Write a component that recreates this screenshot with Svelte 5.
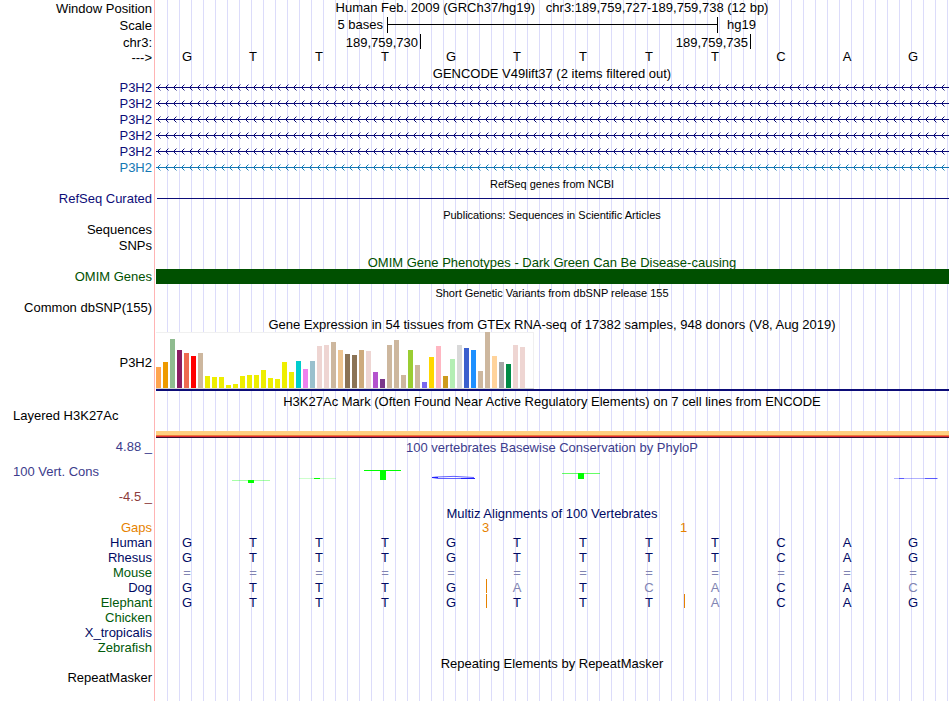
<script>
  const bases = [...'GTTTGTTTTCAG'];

  const transcripts = [
    { name: 'P3H2', tone: 'navy' },
    { name: 'P3H2', tone: 'navy' },
    { name: 'P3H2', tone: 'navy' },
    { name: 'P3H2', tone: 'navy' },
    { name: 'P3H2', tone: 'navy' },
    { name: 'P3H2', tone: 'sky' }
  ];

  // one [height, colour] pair per tissue
  const tissues = [
    [21, '#ffa54f'], [26, '#ee9a00'], [49, '#8fbc8f'], [38, '#8b1c62'], [35, '#ee6a50'],
    [32, '#ff0000'], [35, '#cdb79e'], [12, '#eeee00'], [11, '#eeee00'], [11, '#eeee00'],
    [3, '#eeee00'], [4, '#eeee00'], [12, '#eeee00'], [13, '#eeee00'], [13, '#eeee00'],
    [18, '#eeee00'], [10, '#eeee00'], [9, '#eeee00'], [26, '#eeee00'], [16, '#eeee00'],
    [27, '#00cdcd'], [19, '#ee82ee'], [27, '#9ac0cd'], [42, '#eed5d2'], [43, '#eed5d2'],
    [46, '#cdb79e'], [38, '#eec591'], [34, '#8b7355'], [33, '#8b7355'], [38, '#cdaa7d'],
    [37, '#eed5d2'], [16, '#b452cd'], [9, '#7a378b'], [43, '#cdb79e'], [48, '#cdb79e'],
    [13, '#cdb79e'], [38, '#9acd32'], [23, '#cdb79e'], [6, '#7a67ee'], [31, '#ffd700'],
    [42, '#ffb6c1'], [12, '#cd9b1d'], [29, '#b4eeb4'], [43, '#d9d9d9'], [40, '#3a5fcd'],
    [38, '#1e90ff'], [17, '#cdb79e'], [56, '#cdb79e'], [32, '#ffd39b'], [26, '#a6a6a6'],
    [24, '#008b45'], [43, '#eed5d2'], [41, '#eed5d2'], [0, '#ff00ff']
  ];

  const gaps = { 4: '3', 7: '1' };

  // "faint" lists mismatching columns, "inserts" the columns followed by an insertion
  const species = [
    { name: 'Human', tone: 'ink', seq: 'GTTTGTTTTCAG', faint: [], inserts: [] },
    { name: 'Rhesus', tone: 'ink', seq: 'GTTTGTTTTCAG', faint: [], inserts: [] },
    { name: 'Mouse', tone: 'leaf', seq: '============', faint: [0, 1, 2, 3, 4, 5, 6, 7, 8, 9, 10, 11], inserts: [] },
    { name: 'Dog', tone: 'ink', seq: 'GTTTGATCACAC', faint: [5, 7, 8, 11], inserts: [4] },
    { name: 'Elephant', tone: 'leaf', seq: 'GTTTGTTTACAG', faint: [8], inserts: [4, 7] },
    { name: 'Chicken', tone: 'leaf', seq: '            ', faint: [], inserts: [] },
    { name: 'X_tropicalis', tone: 'ink', seq: '            ', faint: [], inserts: [] },
    { name: 'Zebrafish', tone: 'leaf', seq: '            ', faint: [], inserts: [] }
  ];
</script>

{#snippet title(text, size = '', tone = '')}
  <h2 class="title {size} {tone}">{text}</h2>
{/snippet}

<main class="browser">
  <header>
    <div class="row head">
      <div class="label low">Window Position</div>
      <h1>Human Feb. 2009 (GRCh37/hg19)&nbsp;&nbsp; chr3:189,759,727-189,759,738 (12 bp)</h1>
    </div>
    <div class="row head">
      <div class="label low">Scale</div>
      <div class="scale">
        <span class="before">5 bases</span>
        <span class="ruler"></span>
        <span class="after">hg19</span>
      </div>
    </div>
    <div class="row ticks">
      <div class="label low">chr3:</div>
      <div class="positions">
        <span>189,759,730</span>
        <span>189,759,735</span>
      </div>
    </div>
    <div class="row head">
      <div class="label low">---&gt;</div>
      <div class="bases">
        {#each bases as base}<span>{base}</span>{/each}
      </div>
    </div>
  </header>

  <section>
    {@render title('GENCODE V49lift37 (2 items filtered out)', 'short')}
    {#each transcripts as t, i}
      <div class="row {t.tone}">
        <div class="label">{t.name}</div>
        <svg class="strand" aria-hidden="true" shape-rendering="crispEdges">
          <defs>
            <pattern id="strand-{i}" width="8" height="15" patternUnits="userSpaceOnUse">
              <path fill="currentColor" d="M0 7h8v1h-8zM2 6h1v1h-1zM2 8h1v1h-1zM3 5h1v1h-1zM3 9h1v1h-1z" />
              <path fill="currentColor" opacity=".45" d="M4 4h1v1h-1zM4 10h1v1h-1z" />
            </pattern>
          </defs>
          <rect width="100%" height="15" fill="url(#strand-{i})" />
        </svg>
      </div>
    {/each}
  </section>

  <section>
    {@render title('RefSeq genes from NCBI', 'small')}
    <div class="row navy">
      <div class="label">RefSeq Curated</div>
      <div class="intron"></div>
    </div>
  </section>

  <section>
    {@render title('Publications: Sequences in Scientific Articles', 'small')}
    <div class="row"><div class="label">Sequences</div></div>
    <div class="row"><div class="label">SNPs</div></div>
  </section>

  <section class="forest">
    {@render title('OMIM Gene Phenotypes - Dark Green Can Be Disease-causing')}
    <div class="row">
      <div class="label">OMIM Genes</div>
      <div class="block"></div>
    </div>
  </section>

  <section>
    {@render title('Short Genetic Variants from dbSNP release 155', 'small')}
    <div class="row"><div class="label">Common dbSNP(155)</div></div>
  </section>

  <section>
    {@render title('Gene Expression in 54 tissues from GTEx RNA-seq of 17382 samples, 948 donors (V8, Aug 2019)', 'tall')}
    <div class="row expression">
      <div class="label low">P3H2</div>
      <div class="gene">
        <div class="bars">
          {#each tissues as [height, color]}
            <i style="height:{height}px;background:{color}"></i>
          {/each}
        </div>
      </div>
    </div>
  </section>

  <section>
    {@render title('H3K27Ac Mark (Often Found Near Active Regulatory Elements) on 7 cell lines from ENCODE', 'taller')}
    <div class="row layered">
      <div class="label left">Layered H3K27Ac</div>
      <div class="signal"></div>
    </div>
  </section>

  <section class="row conservation">
    <div class="axis">
      <span>4.88 _</span>
      <span class="left">100 Vert. Cons</span>
      <span class="min">-4.5 _</span>
    </div>
    <div class="plot">
      <h2>100 vertebrates Basewise Conservation by PhyloP</h2>
      <svg viewBox="0 0 794 40" preserveAspectRatio="none" aria-hidden="true">
        <g fill="#00ff00" shape-rendering="crispEdges">
          <rect x="77" y="25" width="38" height="1" opacity=".35" />
          <rect x="93" y="25" width="6" height="3" />
          <rect x="144" y="23" width="37" height="1" opacity=".2" />
          <rect x="159" y="23" width="6" height="1" />
          <rect x="209" y="15" width="37" height="1" />
          <rect x="225" y="15" width="6" height="10" />
          <rect x="407" y="18" width="38" height="1" opacity=".6" />
          <rect x="423" y="18" width="6" height="6" />
        </g>
        <g fill="none" stroke="#2020ff">
          <path d="M319 22.5Q298 20.5 281 22L277 22.5L283 23.5H319" stroke-width="1" opacity=".7" />
          <path d="M306 23.5H320M277 22.5H283" stroke-width="1" />
          <path d="M739 23.5H783" opacity=".35" />
          <path d="M744 23.5H749M770 23.5H782" opacity=".6" />
        </g>
      </svg>
    </div>
  </section>

  <section>
    {@render title('Multiz Alignments of 100 Vertebrates', 'short', 'ink')}
    <table>
      <tbody>
        <tr class="amber">
          <th scope="row">Gaps</th>
          {#each bases as _, i}
            <td>{#if gaps[i]}<b class="count">{gaps[i]}</b>{/if}</td>
          {/each}
        </tr>
        {#each species as s}
          <tr class="ink">
            <th scope="row" class={s.tone}>{s.name}</th>
            {#each s.seq as base, i}
              <td class:faint={s.faint.includes(i)}>
                {base}{#if s.inserts.includes(i)}<i class="insert"></i>{/if}
              </td>
            {/each}
          </tr>
        {/each}
      </tbody>
    </table>
  </section>

  <section>
    {@render title('Repeating Elements by RepeatMasker')}
    <div class="row"><div class="label">RepeatMasker</div></div>
  </section>
</main>

<style>
  :global(body) {
    margin: 0;
    background: #fff;
  }

  .browser {
    --label: 155px;
    position: relative;
    isolation: isolate;
    box-sizing: border-box;
    min-height: 100vh;
    padding-right: 1px;
    font: 13px/15px "Liberation Sans", Arial, sans-serif;
    color: #000;
    background: linear-gradient(#ffb4b4, #ffb4b4) 154px 0 / 1px 100% no-repeat;
  }

  /* vertical guide lines behind every track */
  .browser::before {
    content: "";
    position: absolute;
    z-index: -1;
    inset: 0 1px 0 167px;
    background: linear-gradient(90deg, #dcdcfa 1px, transparent 1px) 0 0 / 12px 100%;
  }

  h1,
  h2 {
    margin: 0;
    font: inherit;
    text-align: center;
    white-space: nowrap;
  }

  .row {
    display: grid;
    grid-template-columns: var(--label) minmax(0, 1fr);
    min-height: 16px;
  }

  .head {
    min-height: 17px;
  }

  .label {
    padding-right: 3px;
    text-align: right;
    white-space: nowrap;
  }

  .low {
    padding-top: 1px;
  }

  .left {
    padding-left: 13px;
    text-align: left;
  }

  .title {
    display: flex;
    align-items: flex-end;
    justify-content: center;
    height: 15px;
    margin-left: var(--label);
    line-height: 13px;
  }

  .short {
    height: 14px;
  }

  .tall {
    height: 16px;
    line-height: 15px;
  }

  .taller {
    height: 17px;
  }

  .small {
    font-size: 11px;
  }

  .navy { color: #0c0c78; }
  .sky { color: #1478b4; }
  .forest { color: #005000; }
  .ink { color: #000a64; }
  .leaf { color: #005a0a; }
  .amber { color: #e68200; }

  .scale {
    display: grid;
    grid-template-columns: 232fr 331fr 231fr;
  }

  .before {
    padding-right: 4px;
    text-align: right;
  }

  .after {
    padding-left: 9px;
  }

  .ruler {
    height: 16px;
    border: solid #000;
    border-width: 0 1px;
    background: linear-gradient(#000, #000) 0 7px / 100% 1px no-repeat;
  }

  .ticks {
    height: 15px;
    min-height: 0;
  }

  .positions {
    display: grid;
    grid-template-columns: 266fr 330fr 198fr;
  }

  .positions span {
    box-sizing: border-box;
    height: 15px;
    padding: 1px 2px 0 0;
    border-right: 1px solid #000;
    text-align: right;
  }

  .bases {
    display: grid;
    grid-template-columns: repeat(12, 1fr);
    padding-right: 2px;
  }

  .bases span {
    padding-right: 2px;
    text-align: center;
  }

  .strand {
    display: block;
    width: calc(100% - 1px);
    height: 15px;
    margin-left: 1px;
  }

  .intron {
    height: 1px;
    margin: 7px 0 0 2px;
    background: currentColor;
  }

  .block {
    height: 15px;
    margin-left: 1px;
    background: currentColor;
  }

  .expression {
    align-items: center;
  }

  .gene {
    margin-left: 1px;
    border-bottom: 2px solid #0c0c78;
  }

  .bars {
    display: flex;
    align-items: flex-end;
    gap: 2px;
    width: max-content;
    height: 56px;
    padding-right: 2px;
    border-bottom: 1px solid #d2d2d2;
    background: #fff;
    box-shadow: inset -1px 1px #f0f0f0;
  }

  .bars i {
    width: 5px;
  }

  .layered {
    height: 30px;
  }

  .signal {
    align-self: end;
    height: 7px;
    margin-left: 1px;
    background: linear-gradient(#ffd080 4px, #f07a38 4px 5px, #e02c34 5px 6px, #38102c 6px);
  }

  .axis {
    display: flex;
    flex-direction: column;
    gap: 10px;
    padding: 1px 3px 2px 0;
    text-align: right;
    color: #3c3c8c;
  }

  .axis .left {
    text-align: left;
  }

  .axis .min {
    color: #8c3c3c;
  }

  .plot {
    padding-top: 2px;
    color: #3c3c8c;
  }

  .plot svg {
    display: block;
    width: 100%;
    height: 40px;
  }

  table {
    width: calc(100% - 2px);
    table-layout: fixed;
    border-spacing: 0;
  }

  th,
  td {
    position: relative;
    height: 15px;
    padding: 0 2px 0 0;
    font-weight: normal;
    line-height: 15px;
    text-align: center;
  }

  th {
    box-sizing: border-box;
    width: var(--label);
    padding-right: 3px;
    text-align: right;
  }

  .faint {
    color: #8084b2;
  }

  .count {
    position: absolute;
    top: 0;
    right: -8px;
    width: 15px;
    font-weight: normal;
  }

  .insert {
    position: absolute;
    z-index: 1;
    top: -1px;
    right: -2px;
    width: 1px;
    height: 14px;
    background: #e68200;
  }
</style>
